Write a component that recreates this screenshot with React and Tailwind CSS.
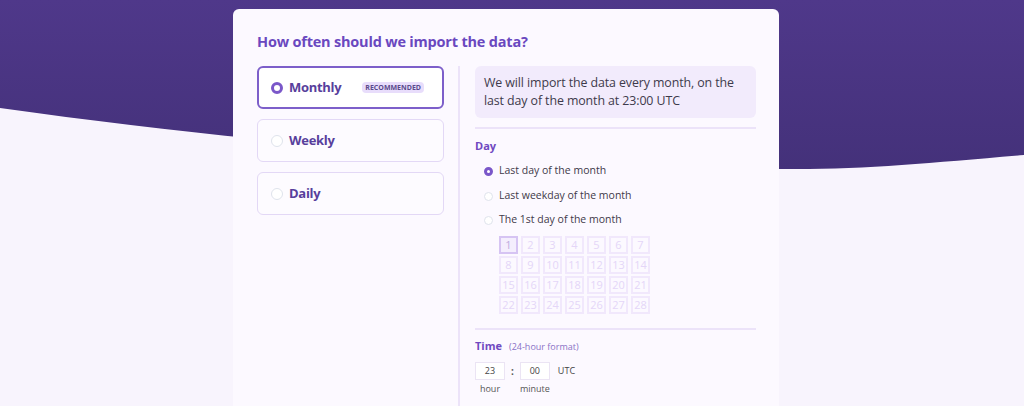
import React, { useState } from "react";

const days = Array.from({ length: 28 }, (_, i) => i + 1);

const Radio = ({ checked, size = "sm" }) => {
  if (size === "lg") {
    return checked ? (
      <span className="w-[12px] h-[12px] rounded-full border-[3px] border-[#7a57c9] bg-white shrink-0" />
    ) : (
      <span className="w-[12px] h-[12px] rounded-full border border-[#dfe3ec] bg-white shrink-0" />
    );
  }
  return checked ? (
    <span className="w-[9px] h-[9px] rounded-full border-[3px] border-[#7a57c9] bg-white shrink-0" />
  ) : (
    <span className="w-[9px] h-[9px] rounded-full border border-[#dfe3ec] bg-white shrink-0" />
  );
};

const App = () => {
  const [freq, setFreq] = useState("monthly");
  const [day, setDay] = useState("last");

  const options = [
    { id: "monthly", label: "Monthly", badge: true },
    { id: "weekly", label: "Weekly" },
    { id: "daily", label: "Daily" },
  ];

  const dayOptions = [
    { id: "last", label: "Last day of the month", cls: "h-[26px]" },
    { id: "weekday", label: "Last weekday of the month", cls: "h-[24px]" },
    { id: "first", label: "The 1st day of the month", cls: "h-[24px]" },
  ];

  return (
    <div
      className="relative w-full h-[406px] overflow-hidden bg-[#f8f4fd]"
      style={{ fontFamily: '"Open Sans", "Noto Sans", sans-serif' }}
    >
      {/* wave background */}
      <svg
        className="absolute inset-0"
        width="1024"
        height="406"
        viewBox="0 0 1024 406"
        preserveAspectRatio="none"
      >
        <defs>
          <linearGradient id="bg" x1="0" y1="0" x2="0" y2="1">
            <stop offset="0" stopColor="#4f388a" />
            <stop offset="1" stopColor="#44317a" />
          </linearGradient>
        </defs>
        <path
          d="M0 0 H1024 V155 C930 163 860 170 780 169 C560 166 300 150 0 108 Z"
          fill="url(#bg)"
        />
      </svg>

      <div className="relative flex pl-[233px] pt-[9px]">
        <div className="w-[546px] h-[420px] bg-[#fcf9ff] rounded-md px-6 pt-[23px]">
          <h1 className="text-[14.5px] font-bold text-[#6a48bf] leading-[20px] tracking-[-0.2px]">
            How often should we import the data?
          </h1>

          <div className="flex mt-[14px]">
            {/* frequency options */}
            <div className="w-[187px] shrink-0 flex flex-col gap-[10px]">
              {options.map((o) => {
                const active = freq === o.id;
                return (
                  <button
                    key={o.id}
                    onClick={() => setFreq(o.id)}
                    className={`h-[43px] flex items-center rounded-md px-[12px] text-left ${
                      active
                        ? "border-2 border-[#7d5fca] bg-white"
                        : "border border-[#e3d8f6] bg-[#fdfbff] pl-[13px]"
                    }`}
                  >
                    <Radio checked={active} size="lg" />
                    <span className="ml-[6px] text-[13px] font-bold text-[#583f9c] tracking-[-0.3px]">
                      {o.label}
                    </span>
                    {o.badge && (
                      <span className="ml-auto mr-[6px] bg-[#e8ddfb] text-[#5a4a8c] text-[7px] font-bold px-[3px] leading-[11px] rounded-sm">
                        RECOMMENDED
                      </span>
                    )}
                  </button>
                );
              })}
            </div>

            {/* divider */}
            <div className="w-[2px] shrink-0 bg-[#ece3f9] ml-[14px] mr-[15px] h-[340px]" />

            {/* details */}
            <div className="w-[281px] shrink-0">
              <div className="bg-[#f2ebfc] rounded-md pl-[9px] pr-[4px] pt-[8px] pb-[8px] h-[52px] text-[12.4px] leading-[18px] text-[#3e3a4b] tracking-[-0.1px]">
                We will import the data every month, on the last day of the month at 23:00 UTC
              </div>

              <div className="h-[2px] bg-[#ece3f9] mt-[9px]" />

              <div className="text-[11px] font-bold text-[#7049c1] mt-[9px] leading-[15px]">
                Day
              </div>

              <div className="mt-[5px] pl-[9px]">
                {dayOptions.map((d) => (
                  <button
                    key={d.id}
                    onClick={() => setDay(d.id)}
                    className={`flex items-center gap-[6px] ${d.cls}`}
                  >
                    <Radio checked={day === d.id} />
                    <span className="text-[10.5px] text-[#3f3a4a]">{d.label}</span>
                  </button>
                ))}

                <div className="grid grid-cols-[repeat(7,19px)] gap-x-[3px] gap-y-[2px] ml-[15px] mt-[4px]">
                  {days.map((n) => (
                    <div
                      key={n}
                      className={`h-[18px] flex items-center justify-center text-[11px] border-2 ${
                        n === 1
                          ? "border-[#d6c4f3] bg-[#f4eefd] text-[#c0acdf]"
                          : "border-[#f1e8fc] text-[#e4d6f8]"
                      }`}
                    >
                      {n}
                    </div>
                  ))}
                </div>
              </div>

              <div className="h-[2px] bg-[#ece3f9] mt-[14px]" />

              <div className="flex items-baseline gap-[7px] mt-[8px] leading-[15px]">
                <span className="text-[11px] font-bold text-[#7049c1]">Time</span>
                <span className="text-[9px] text-[#8a72c6]">(24-hour format)</span>
              </div>

              <div className="flex items-start mt-[8px]">
                <div className="flex flex-col items-center">
                  <div className="w-[30px] h-[18px] border border-[#ebe4f4] bg-white text-[9px] text-[#444] flex items-center justify-center">
                    23
                  </div>
                  <span className="text-[9px] text-[#555] mt-[2px]">hour</span>
                </div>
                <span className="text-[10px] font-bold text-[#555] mx-[6px] leading-[18px]">:</span>
                <div className="flex flex-col items-center">
                  <div className="w-[30px] h-[18px] border border-[#ebe4f4] bg-white text-[9px] text-[#444] flex items-center justify-center">
                    00
                  </div>
                  <span className="text-[9px] text-[#555] mt-[2px]">minute</span>
                </div>
                <span className="text-[9px] text-[#444] ml-[8px] leading-[18px]">UTC</span>
              </div>
            </div>
          </div>
        </div>
      </div>
    </div>
  );
};

export default App;
